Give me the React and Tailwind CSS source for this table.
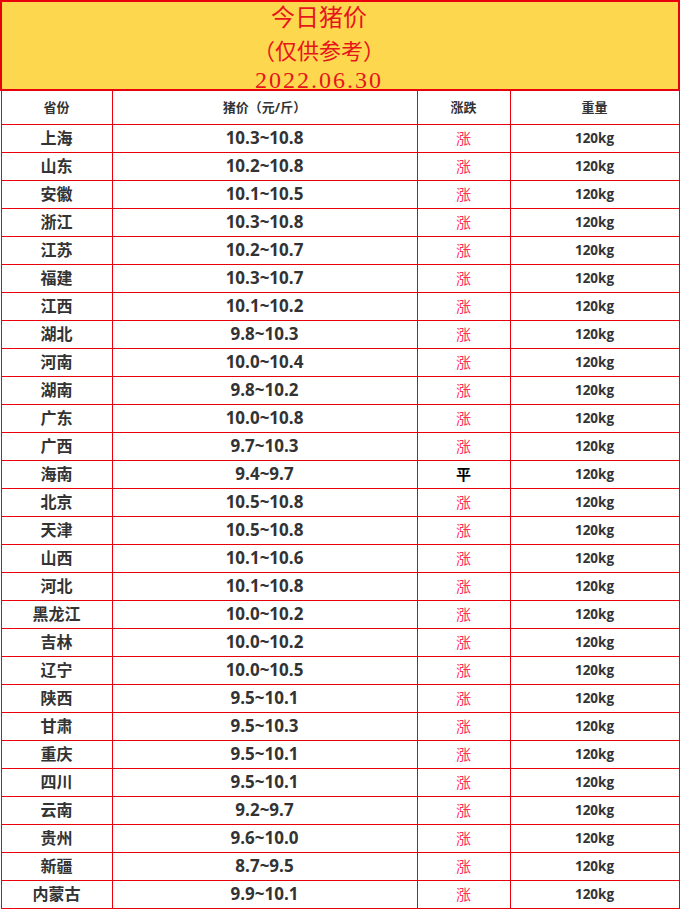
import React from 'react';

const rows = [
  ['上海', '10.3~10.8', '涨'],
  ['山东', '10.2~10.8', '涨'],
  ['安徽', '10.1~10.5', '涨'],
  ['浙江', '10.3~10.8', '涨'],
  ['江苏', '10.2~10.7', '涨'],
  ['福建', '10.3~10.7', '涨'],
  ['江西', '10.1~10.2', '涨'],
  ['湖北', '9.8~10.3', '涨'],
  ['河南', '10.0~10.4', '涨'],
  ['湖南', '9.8~10.2', '涨'],
  ['广东', '10.0~10.8', '涨'],
  ['广西', '9.7~10.3', '涨'],
  ['海南', '9.4~9.7', '平'],
  ['北京', '10.5~10.8', '涨'],
  ['天津', '10.5~10.8', '涨'],
  ['山西', '10.1~10.6', '涨'],
  ['河北', '10.1~10.8', '涨'],
  ['黑龙江', '10.0~10.2', '涨'],
  ['吉林', '10.0~10.2', '涨'],
  ['辽宁', '10.0~10.5', '涨'],
  ['陕西', '9.5~10.1', '涨'],
  ['甘肃', '9.5~10.3', '涨'],
  ['重庆', '9.5~10.1', '涨'],
  ['四川', '9.5~10.1', '涨'],
  ['云南', '9.2~9.7', '涨'],
  ['贵州', '9.6~10.0', '涨'],
  ['新疆', '8.7~9.5', '涨'],
  ['内蒙古', '9.9~10.1', '涨'],
];

const sans = 'font-["Open_Sans","Noto_Sans_CJK_SC",sans-serif]';

export default function App() {
  return (
    <div className={`bg-white w-[682px] ${sans} text-[#333]`}>
      <table className="border-collapse table-fixed w-[678px]">
        <colgroup>
          <col className="w-[111px]" />
          <col className="w-[305px]" />
          <col className="w-[93px]" />
          <col className="w-[169px]" />
        </colgroup>
        <tbody>
          <tr>
            <td colSpan={4} className="border-2 border-[#e8000b] bg-[#fdd84e] p-0 align-top">
              <div className='h-[87px] flex flex-col items-center pr-[42px] text-[#e8141c] text-[24px] leading-[33px] font-["Liberation_Serif","Noto_Sans_CJK_SC",serif]'>
                <div>今日猪价</div>
                <div className="text-[22px]">（仅供参考）</div>
                <div className="tracking-[2px] leading-[20px] mt-[2px]">2022.06.30</div>
              </div>
            </td>
          </tr>
          <tr className="h-[34px] text-[13px] font-bold">
            <td className="border border-[#e8000b] text-center p-0">省份</td>
            <td className="border border-[#e8000b] text-center p-0">猪价（元/斤）</td>
            <td className="border border-[#e8000b] text-center p-0">涨跌</td>
            <td className="border border-[#e8000b] text-center p-0">重量</td>
          </tr>
          {rows.map(([p, price, t]) => (
            <tr key={p} className="h-[28px]">
              <td className="border border-[#e8000b] text-center p-0 text-[16px] leading-[20px] font-semibold">{p}</td>
              <td className="border border-[#e8000b] text-center p-0 text-[17px] leading-[20px] font-bold">{price}</td>
              <td
                className={
                  t === '涨'
                    ? 'border border-[#e8000b] text-center p-0 text-[15px] leading-[20px] text-[#ff2d55]'
                    : 'border border-[#e8000b] text-center p-0 text-[15px] leading-[20px] font-bold text-black'
                }
              >
                {t}
              </td>
              <td className="border border-[#e8000b] text-center p-0 text-[13.5px] leading-[20px] font-bold">120kg</td>
            </tr>
          ))}
        </tbody>
      </table>
    </div>
  );
}
